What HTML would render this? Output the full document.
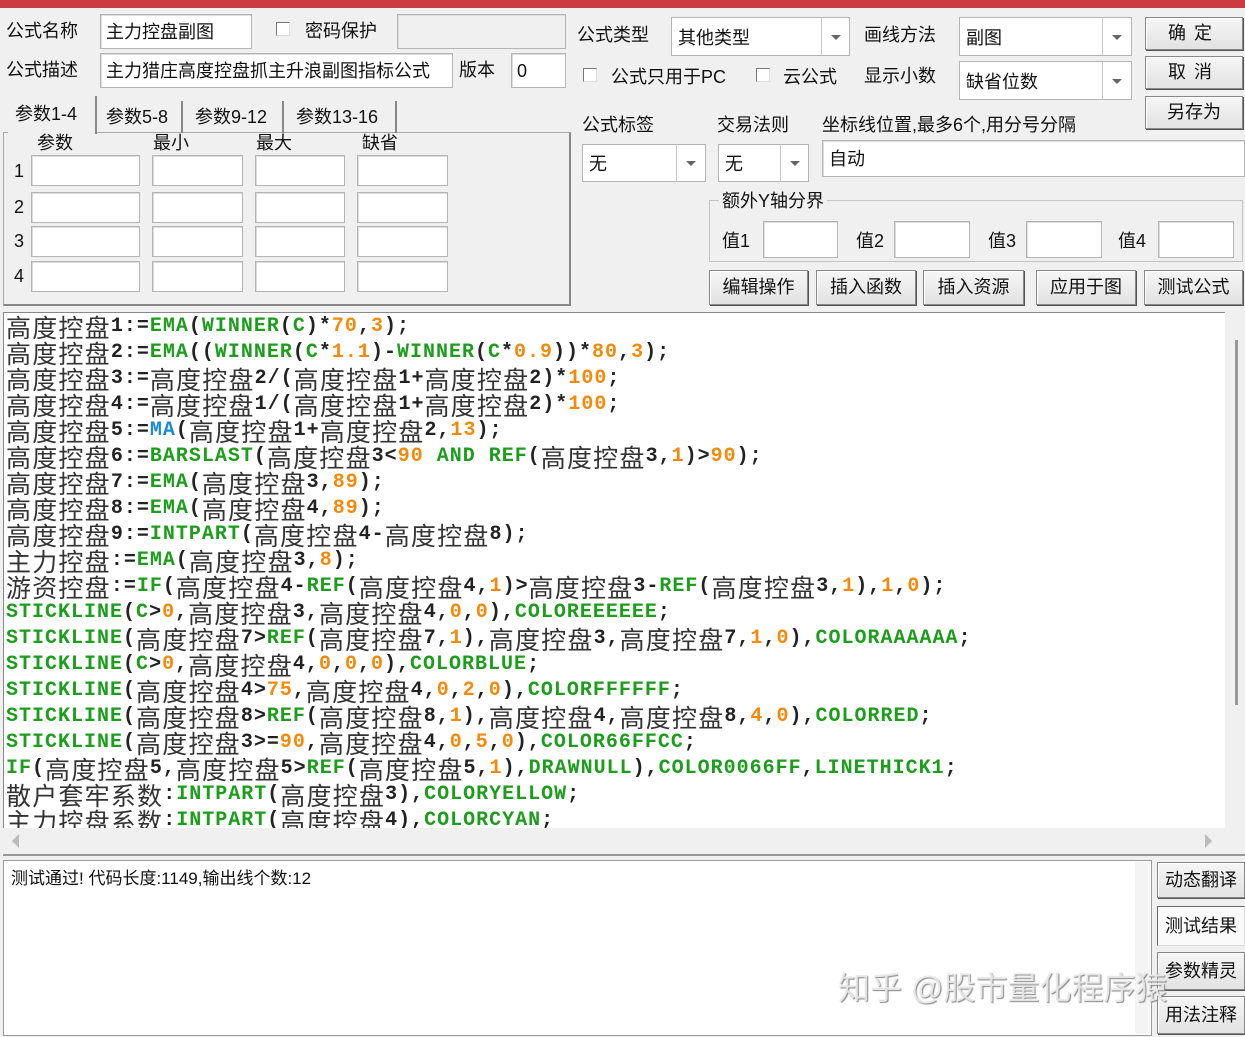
<!DOCTYPE html>
<html><head><meta charset="utf-8"><style>
*{box-sizing:border-box;margin:0;padding:0}
body{width:1245px;height:1037px;background:#f0f0f0;position:relative;overflow:hidden;font-family:"Liberation Sans","Noto Sans CJK SC",sans-serif;font-size:18px;color:#111}
.a{position:absolute}
.t{position:absolute;white-space:nowrap;line-height:20px}
.in{position:absolute;background:#fff;border:1px solid #b4b4b4;box-shadow:inset 1px 1px 0 #ddd}
.dis{background:#f0f0f0}
.cb{position:absolute;width:14px;height:14px;border:1px solid #777;border-right-color:#ddd;border-bottom-color:#ddd;background:#fff}
.dd{position:absolute;background:#fff;border:1px solid #b4b4b4}
.dd .s{position:absolute;top:0;bottom:0;right:0;border-left:1px solid #c8c8c8;background:#fff}
.dd .s:after{content:"";position:absolute;left:50%;top:50%;margin:-2px 0 0 -5px;border-left:5px solid transparent;border-right:5px solid transparent;border-top:5px solid #666}
.dd span{position:absolute;left:6px;top:50%;transform:translateY(-50%);white-space:nowrap}
.btn{position:absolute;background:linear-gradient(#f6f6f6,#e2e2e2);border:1px solid #888;box-shadow:inset 1px 1px 0 #fff,1px 1px 0 #555;text-align:center;white-space:nowrap}
.code{position:absolute;left:3px;top:312px;width:1222px;height:516px;background:#fff;overflow:hidden;border-left:1px solid #888;border-top:1px solid #888}
.l{height:26px;line-height:26px;white-space:nowrap;font-family:"Liberation Mono",monospace;font-weight:bold;font-size:20px;letter-spacing:1px;color:#222;padding-left:2px}
.l i{font-style:normal;font-family:"Noto Sans CJK SC",sans-serif;font-weight:normal;font-size:25px;letter-spacing:1.2px;vertical-align:top;color:#333}
.g{color:#1c9e1c}.o{color:#f58a0a}.b{color:#1a8ad8}
</style></head><body>
<div class="a" style="left:0;top:0;width:1245px;height:8px;background:#cc3b42"></div>

<div class="t" style="left:6px;top:21px">公式名称</div>
<div class="in" style="left:100px;top:14px;width:152px;height:35px"><span class="t" style="left:5px;top:7px">主力控盘副图</span></div>
<div class="cb" style="left:276px;top:22px"></div>
<div class="t" style="left:305px;top:21px">密码保护</div>
<div class="in dis" style="left:397px;top:14px;width:169px;height:35px"></div>

<div class="t" style="left:6px;top:60px">公式描述</div>
<div class="in" style="left:100px;top:53px;width:353px;height:35px;overflow:hidden"><span class="t" style="left:5px;top:7px">主力猎庄高度控盘抓主升浪副图指标公式</span></div>
<div class="t" style="left:459px;top:60px">版本</div>
<div class="in" style="left:511px;top:53px;width:55px;height:35px"><span class="t" style="left:5px;top:7px">0</span></div>

<div class="a" style="left:3px;top:132px;width:568px;height:174px;border:1px solid #aaa;border-right:2px solid #888;border-bottom:2px solid #888"></div>
<div class="a" style="left:8px;top:96px;width:89px;height:38px;background:#f0f0f0;border-right:2px solid #888"></div>
<div class="t" style="left:15px;top:104px">参数1-4</div>
<div class="a" style="left:98px;top:101px;width:85px;height:32px;border-right:2px solid #888"></div>
<div class="t" style="left:106px;top:107px">参数5-8</div>
<div class="a" style="left:186px;top:101px;width:98px;height:32px;border-right:2px solid #888"></div>
<div class="t" style="left:195px;top:107px">参数9-12</div>
<div class="a" style="left:288px;top:101px;width:109px;height:32px;border-right:2px solid #888"></div>
<div class="t" style="left:296px;top:107px">参数13-16</div>
<div class="t" style="left:37px;top:133px">参数</div>
<div class="t" style="left:153px;top:133px">最小</div>
<div class="t" style="left:256px;top:133px">最大</div>
<div class="t" style="left:362px;top:133px">缺省</div>
<div class="t" style="left:14px;top:161px">1</div>
<div class="t" style="left:14px;top:197px">2</div>
<div class="t" style="left:14px;top:231px">3</div>
<div class="t" style="left:14px;top:266px">4</div>
<div class="in" style="left:31px;top:155px;width:109px;height:31px"></div><div class="in" style="left:152px;top:155px;width:91px;height:31px"></div><div class="in" style="left:255px;top:155px;width:90px;height:31px"></div><div class="in" style="left:357px;top:155px;width:91px;height:31px"></div>
<div class="in" style="left:31px;top:192px;width:109px;height:31px"></div><div class="in" style="left:152px;top:192px;width:91px;height:31px"></div><div class="in" style="left:255px;top:192px;width:90px;height:31px"></div><div class="in" style="left:357px;top:192px;width:91px;height:31px"></div>
<div class="in" style="left:31px;top:226px;width:109px;height:31px"></div><div class="in" style="left:152px;top:226px;width:91px;height:31px"></div><div class="in" style="left:255px;top:226px;width:90px;height:31px"></div><div class="in" style="left:357px;top:226px;width:91px;height:31px"></div>
<div class="in" style="left:31px;top:261px;width:109px;height:31px"></div><div class="in" style="left:152px;top:261px;width:91px;height:31px"></div><div class="in" style="left:255px;top:261px;width:90px;height:31px"></div><div class="in" style="left:357px;top:261px;width:91px;height:31px"></div>

<div class="t" style="left:577px;top:25px">公式类型</div>
<div class="dd" style="left:671px;top:17px;width:179px;height:39px"><span>其他类型</span><div class="s" style="width:28px"></div></div>
<div class="t" style="left:864px;top:25px">画线方法</div>
<div class="dd" style="left:959px;top:17px;width:173px;height:39px"><span>副图</span><div class="s" style="width:29px"></div></div>
<div class="cb" style="left:583px;top:68px"></div>
<div class="t" style="left:611px;top:67px">公式只用于PC</div>
<div class="cb" style="left:756px;top:68px"></div>
<div class="t" style="left:783px;top:67px">云公式</div>
<div class="t" style="left:864px;top:66px">显示小数</div>
<div class="dd" style="left:959px;top:61px;width:173px;height:39px"><span>缺省位数</span><div class="s" style="width:29px"></div></div>
<div class="btn" style="left:1145px;top:17px;width:98px;height:33px;line-height:31px;letter-spacing:8px">确定</div>
<div class="btn" style="left:1145px;top:56px;width:98px;height:33px;line-height:31px;letter-spacing:8px">取消</div>
<div class="btn" style="left:1145px;top:96px;width:98px;height:33px;line-height:31px">另存为</div>

<div class="t" style="left:582px;top:115px">公式标签</div>
<div class="t" style="left:717px;top:115px">交易法则</div>
<div class="t" style="left:822px;top:115px">坐标线位置,最多6个,用分号分隔</div>
<div class="dd" style="left:582px;top:144px;width:124px;height:38px"><span>无</span><div class="s" style="width:29px"></div></div>
<div class="dd" style="left:718px;top:144px;width:91px;height:38px"><span>无</span><div class="s" style="width:28px"></div></div>
<div class="in" style="left:822px;top:140px;width:423px;height:37px"><span class="t" style="left:6px;top:8px">自动</span></div>

<div class="a" style="left:709px;top:200px;width:534px;height:62px;border:1px solid #c4c4c4"></div>
<div class="t" style="left:719px;top:191px;background:#f0f0f0;padding:0 3px">额外Y轴分界</div>
<div class="t" style="left:722px;top:231px">值1</div>
<div class="in" style="left:763px;top:221px;width:75px;height:37px"></div>
<div class="t" style="left:856px;top:231px">值2</div>
<div class="in" style="left:894px;top:221px;width:76px;height:37px"></div>
<div class="t" style="left:988px;top:231px">值3</div>
<div class="in" style="left:1026px;top:221px;width:76px;height:37px"></div>
<div class="t" style="left:1118px;top:231px">值4</div>
<div class="in" style="left:1158px;top:221px;width:76px;height:37px"></div>

<div class="btn" style="left:709px;top:270px;width:99px;height:35px;line-height:33px">编辑操作</div>
<div class="btn" style="left:816px;top:270px;width:100px;height:35px;line-height:33px">插入函数</div>
<div class="btn" style="left:923px;top:270px;width:101px;height:35px;line-height:33px">插入资源</div>
<div class="btn" style="left:1036px;top:270px;width:100px;height:35px;line-height:33px">应用于图</div>
<div class="btn" style="left:1144px;top:270px;width:99px;height:35px;line-height:33px">测试公式</div>

<div class="a" style="left:1225px;top:312px;width:20px;height:516px;background:#f0f0f0"></div>
<div class="a" style="left:1235px;top:340px;width:3px;height:365px;background:#999"></div>
<div class="a" style="left:3px;top:828px;width:1242px;height:28px;background:#f0f0f0;border-bottom:2px solid #999"></div>
<div class="a" style="left:12px;top:834px;border-top:7px solid transparent;border-bottom:7px solid transparent;border-right:7px solid #bbb"></div>
<div class="a" style="left:1205px;top:834px;border-top:7px solid transparent;border-bottom:7px solid transparent;border-left:7px solid #bbb"></div>
<div class="code" style="padding-top:1px">
<div class="l"><i>高度控盘</i>1:=<span class="g">EMA</span>(<span class="g">WINNER</span>(<span class="g">C</span>)*<span class="o">70</span>,<span class="o">3</span>);</div>
<div class="l"><i>高度控盘</i>2:=<span class="g">EMA</span>((<span class="g">WINNER</span>(<span class="g">C</span>*<span class="o">1.1</span>)-<span class="g">WINNER</span>(<span class="g">C</span>*<span class="o">0.9</span>))*<span class="o">80</span>,<span class="o">3</span>);</div>
<div class="l"><i>高度控盘</i>3:=<i>高度控盘</i>2/(<i>高度控盘</i>1+<i>高度控盘</i>2)*<span class="o">100</span>;</div>
<div class="l"><i>高度控盘</i>4:=<i>高度控盘</i>1/(<i>高度控盘</i>1+<i>高度控盘</i>2)*<span class="o">100</span>;</div>
<div class="l"><i>高度控盘</i>5:=<span class="b">MA</span>(<i>高度控盘</i>1+<i>高度控盘</i>2,<span class="o">13</span>);</div>
<div class="l"><i>高度控盘</i>6:=<span class="g">BARSLAST</span>(<i>高度控盘</i>3&lt;<span class="o">90</span> <span class="g">AND</span> <span class="g">REF</span>(<i>高度控盘</i>3,<span class="o">1</span>)&gt;<span class="o">90</span>);</div>
<div class="l"><i>高度控盘</i>7:=<span class="g">EMA</span>(<i>高度控盘</i>3,<span class="o">89</span>);</div>
<div class="l"><i>高度控盘</i>8:=<span class="g">EMA</span>(<i>高度控盘</i>4,<span class="o">89</span>);</div>
<div class="l"><i>高度控盘</i>9:=<span class="g">INTPART</span>(<i>高度控盘</i>4-<i>高度控盘</i>8);</div>
<div class="l"><i>主力控盘</i>:=<span class="g">EMA</span>(<i>高度控盘</i>3,<span class="o">8</span>);</div>
<div class="l"><i>游资控盘</i>:=<span class="g">IF</span>(<i>高度控盘</i>4-<span class="g">REF</span>(<i>高度控盘</i>4,<span class="o">1</span>)&gt;<i>高度控盘</i>3-<span class="g">REF</span>(<i>高度控盘</i>3,<span class="o">1</span>),<span class="o">1</span>,<span class="o">0</span>);</div>
<div class="l"><span class="g">STICKLINE</span>(<span class="g">C</span>&gt;<span class="o">0</span>,<i>高度控盘</i>3,<i>高度控盘</i>4,<span class="o">0</span>,<span class="o">0</span>),<span class="g">COLOREEEEEE</span>;</div>
<div class="l"><span class="g">STICKLINE</span>(<i>高度控盘</i>7&gt;<span class="g">REF</span>(<i>高度控盘</i>7,<span class="o">1</span>),<i>高度控盘</i>3,<i>高度控盘</i>7,<span class="o">1</span>,<span class="o">0</span>),<span class="g">COLORAAAAAA</span>;</div>
<div class="l"><span class="g">STICKLINE</span>(<span class="g">C</span>&gt;<span class="o">0</span>,<i>高度控盘</i>4,<span class="o">0</span>,<span class="o">0</span>,<span class="o">0</span>),<span class="g">COLORBLUE</span>;</div>
<div class="l"><span class="g">STICKLINE</span>(<i>高度控盘</i>4&gt;<span class="o">75</span>,<i>高度控盘</i>4,<span class="o">0</span>,<span class="o">2</span>,<span class="o">0</span>),<span class="g">COLORFFFFFF</span>;</div>
<div class="l"><span class="g">STICKLINE</span>(<i>高度控盘</i>8&gt;<span class="g">REF</span>(<i>高度控盘</i>8,<span class="o">1</span>),<i>高度控盘</i>4,<i>高度控盘</i>8,<span class="o">4</span>,<span class="o">0</span>),<span class="g">COLORRED</span>;</div>
<div class="l"><span class="g">STICKLINE</span>(<i>高度控盘</i>3&gt;=<span class="o">90</span>,<i>高度控盘</i>4,<span class="o">0</span>,<span class="o">5</span>,<span class="o">0</span>),<span class="g">COLOR66FFCC</span>;</div>
<div class="l"><span class="g">IF</span>(<i>高度控盘</i>5,<i>高度控盘</i>5&gt;<span class="g">REF</span>(<i>高度控盘</i>5,<span class="o">1</span>),<span class="g">DRAWNULL</span>),<span class="g">COLOR0066FF</span>,<span class="g">LINETHICK1</span>;</div>
<div class="l"><i>散户套牢系数</i>:<span class="g">INTPART</span>(<i>高度控盘</i>3),<span class="g">COLORYELLOW</span>;</div>
<div class="l"><i>主力控盘系数</i>:<span class="g">INTPART</span>(<i>高度控盘</i>4),<span class="g">COLORCYAN</span>;</div>
</div>

<div class="a" style="left:3px;top:860px;width:1149px;height:176px;background:#fff;border:1px solid #999"></div>
<div class="a" style="left:1135px;top:862px;width:15px;height:172px;background:#f4f4f4"></div>
<div class="t" style="left:11px;top:869px;font-size:17px">测试通过! 代码长度:1149,输出线个数:12</div>
<div class="btn" style="left:1157px;top:862px;width:88px;height:36px;line-height:34px">动态翻译</div>
<div class="a" style="left:1157px;top:906px;width:88px;height:40px;background:#fafafa;border:1px solid #666;border-right-color:#ddd;border-bottom-color:#ddd;text-align:center;line-height:38px">测试结果</div>
<div class="btn" style="left:1157px;top:952px;width:88px;height:38px;line-height:36px">参数精灵</div>
<div class="btn" style="left:1157px;top:996px;width:88px;height:38px;line-height:36px">用法注释</div>
<div class="t" style="left:838px;top:970px;font-size:32px;line-height:36px;color:rgba(235,235,235,.9);text-shadow:1px 1px 1px #888">知乎 @股市量化程序猿</div>
</body></html>
